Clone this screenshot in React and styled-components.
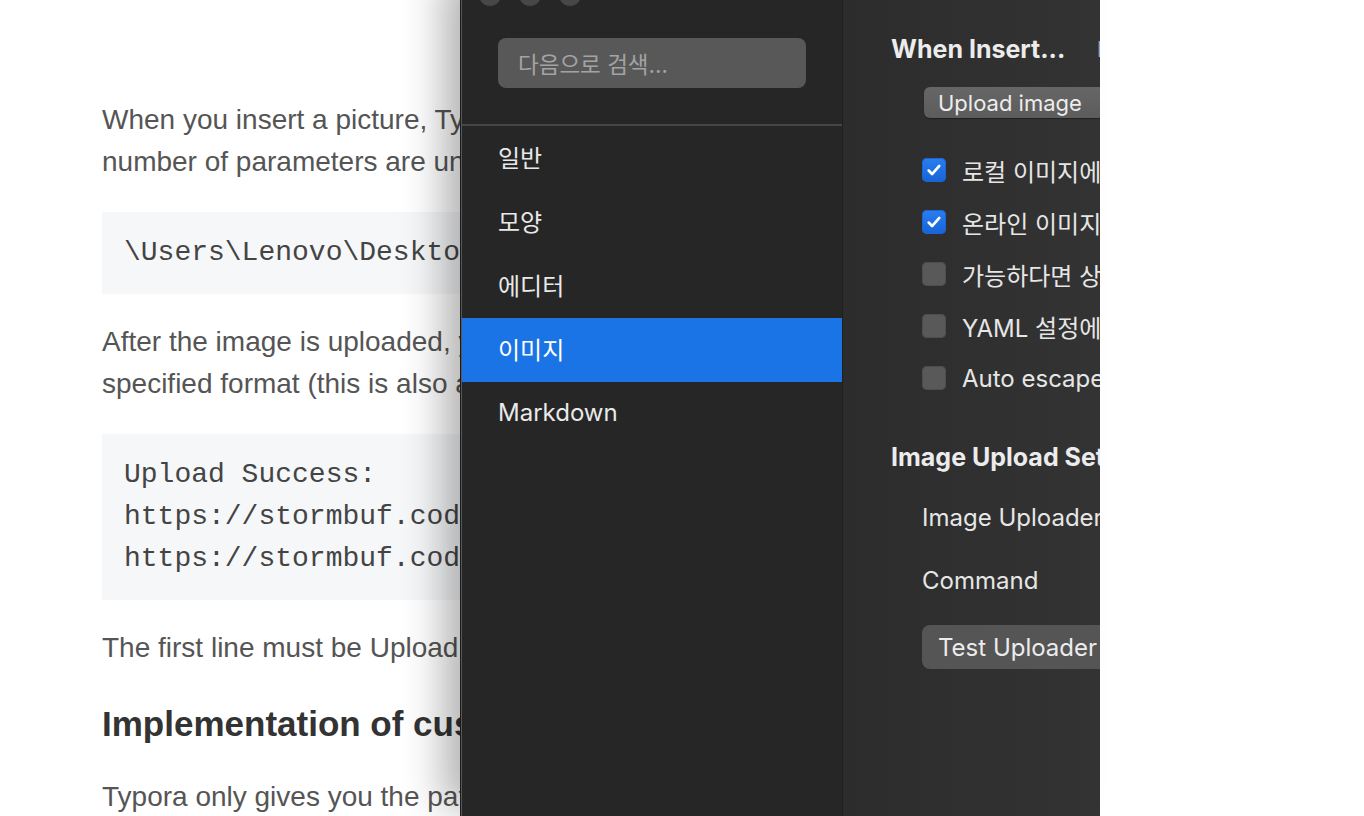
import styled, { createGlobalStyle } from "styled-components";

const GlobalStyle = createGlobalStyle`
  html, body {
    margin: 0;
    padding: 0;
    background: #fff;
    overflow: hidden;
  }
  * {
    box-sizing: border-box;
  }
`;

const UI_FONT = `Inter, "Noto Sans CJK KR", "Noto Sans", sans-serif`;

const navItems = ["일반", "모양", "에디터", "이미지", "Markdown"];

const options = [
    { label: "로컬 이미지에 위의 규칙 적용", checked: true },
    { label: "온라인 이미지에 위의 규칙 적용", checked: true },
    { label: "가능하다면 상대적 위치 사용", checked: false },
    { label: "YAML 설정에 이미지 경로 추가", checked: false },
    { label: "Auto escape image URL when insert", checked: false },
];

const Check = () => (
    <svg width="18" height="18" viewBox="0 0 16 16" fill="none">
        <path d="M3.3 8.5l3 3.1L12.7 4.4" stroke="#fff" strokeWidth="2.4" strokeLinecap="round" strokeLinejoin="round" />
    </svg>
);

const App = () => {
    return (
        <Page>
            <GlobalStyle />
            <Doc>
                <Paragraph>
                    When you insert a picture, Typora will call the command you configured, and an unknown<br />
                    number of parameters are uncovered and passed to your custom command in order.
                </Paragraph>
                <CodeBlock>{"\\Users\\Lenovo\\Desktop\\image.png"}</CodeBlock>
                <Paragraph>
                    After the image is uploaded, your custom command must return the picture links in the<br />
                    specified format (this is also a standard output of the command line):
                </Paragraph>
                <CodeBlock>
                    {"Upload Success:\nhttps://stormbuf.coding.net/p/image/1.png\nhttps://stormbuf.coding.net/p/image/2.png"}
                </CodeBlock>
                <Paragraph>The first line must be Upload Success: and then one picture link per line.</Paragraph>
                <Heading>Implementation of custom upload commands</Heading>
                <Paragraph>Typora only gives you the path of the local picture, and you upload it yourself.</Paragraph>
            </Doc>

            <Window>
                <Sidebar>
                    <Lights>
                        <Light />
                        <Light />
                        <Light />
                    </Lights>
                    <Search>다음으로 검색...</Search>
                    <Divider />
                    <Nav>
                        {navItems.map((item) => (
                            <NavItem key={item} $active={item === "이미지"}>{item}</NavItem>
                        ))}
                    </Nav>
                </Sidebar>

                <Content>
                    <SectionRow>
                        <SectionTitle>When Insert...</SectionTitle>
                        <SideLabel>Insert image</SideLabel>
                    </SectionRow>
                    <SmallButton>Upload image</SmallButton>

                    <Options>
                        {options.map((opt) => (
                            <OptionRow key={opt.label}>
                                <Box $checked={opt.checked}>{opt.checked && <Check />}</Box>
                                <OptionLabel>{opt.label}</OptionLabel>
                            </OptionRow>
                        ))}
                    </Options>

                    <SectionTitle $gap>Image Upload Setting</SectionTitle>
                    <FieldRow $first>Image Uploader</FieldRow>
                    <FieldRow>Command</FieldRow>
                    <BigButton>Test Uploader</BigButton>
                </Content>
            </Window>
        </Page>
    );
}

const Page = styled.div`
    position: relative;
    width: 1364px;
    height: 816px;
    overflow: hidden;
    background: #fff;
`;

const Doc = styled.div`
    width: 980px;
    padding: 99px 0 0 102px;
    overflow: hidden;
    font-family: "Liberation Sans", Arial, sans-serif;
    font-size: 28px;
    line-height: 42px;
    color: #555;
`;

const Paragraph = styled.p`
    margin: 0;
    white-space: nowrap;
`;

const CodeBlock = styled.pre`
    margin: 29px 0 27px;
    padding: 20px 22px;
    background: #f6f7f9;
    font-family: "Liberation Mono", "Courier New", monospace;
    font-size: 28px;
    line-height: 42px;
    color: #444;
    white-space: pre;
    overflow: hidden;
`;

const Heading = styled.h2`
    margin: 32px 0 29px;
    font-size: 35px;
    line-height: 46px;
    font-weight: 700;
    color: #333;
    white-space: nowrap;
`;

const Window = styled.div`
    position: absolute;
    left: 461px;
    top: -40px;
    width: 639px;
    height: 860px;
    display: flex;
    border-left: 1px solid #575757;
    box-shadow: -1px 0 0 #1a1a1a, -28px 0 40px -12px rgba(0, 0, 0, 0.32);
    font-family: ${UI_FONT};
    overflow: hidden;
`;

const Sidebar = styled.div`
    width: 381px;
    flex-shrink: 0;
    background: #262626;
    border-right: 1px solid #1f1f1f;
    display: flex;
    flex-direction: column;
`;

const Lights = styled.div`
    display: flex;
    gap: 18px;
    padding: 24px 0 0 17px;
`;

const Light = styled.span`
    width: 22px;
    height: 22px;
    border-radius: 50%;
    background: #474747;
`;

const Search = styled.div`
    margin: 32px 0 0 36px;
    width: 308px;
    height: 50px;
    border-radius: 8px;
    background: #585858;
    padding-left: 20px;
    display: flex;
    align-items: center;
    font-size: 22.5px;
    color: #a3a3a3;
`;

const Divider = styled.div`
    margin-top: 36px;
    height: 2px;
    background: #454545;
`;

const Nav = styled.div`
    display: flex;
    flex-direction: column;
`;

const NavItem = styled.div`
    height: 64px;
    padding-left: 36px;
    padding-bottom: 3px;
    display: flex;
    align-items: center;
    font-size: 24px;
    background: ${(p) => (p.$active ? "#1a74e6" : "transparent")};
    color: ${(p) => (p.$active ? "#fff" : "#e9e9e9")};
`;

const Content = styled.div`
    flex: 1;
    min-width: 0;
    background: linear-gradient(90deg, #2c2c2c, #333333);
    padding: 73px 0 0 48px;
    display: flex;
    flex-direction: column;
    align-items: flex-start;
    color: #e6e6e6;
    white-space: nowrap;
    overflow: hidden;
`;

const SectionRow = styled.div`
    display: flex;
    gap: 32px;
    align-items: center;
`;

const SectionTitle = styled.div`
    font-size: 25px;
    line-height: 32px;
    font-weight: 700;
    color: #ececec;
    margin-top: ${(p) => (p.$gap ? "37px" : "0")};
`;

const SideLabel = styled.span`
    font-size: 22px;
    font-weight: 700;
    color: #a4a4b4;
`;

const SmallButton = styled.div`
    margin: 22px 0 0 33px;
    height: 31px;
    padding: 0 18px 0 14px;
    width: 240px;
    border-radius: 6px;
    background: linear-gradient(#666, #5c5c5c);
    box-shadow: 0 1px 1px rgba(0, 0, 0, 0.35);
    display: flex;
    align-items: center;
    font-size: 22px;
    color: #ededed;
`;

const Options = styled.div`
    margin: 26px 0 0 31px;
    display: flex;
    flex-direction: column;
`;

const OptionRow = styled.div`
    height: 52px;
    display: flex;
    align-items: center;
    gap: 16px;
`;

const Box = styled.span`
    width: 24px;
    height: 24px;
    border-radius: 5px;
    flex-shrink: 0;
    display: flex;
    align-items: center;
    justify-content: center;
    background: ${(p) => (p.$checked ? "linear-gradient(#2a7ef0, #1663d6)" : "#595959")};
    box-shadow: inset 0 0 0 1px ${(p) => (p.$checked ? "#1a66d4" : "#4d4d4d")};
`;

const OptionLabel = styled.span`
    font-size: 24px;
    color: #e6e6e6;
`;

const FieldRow = styled.div`
    margin: ${(p) => (p.$first ? "13px" : "0")} 0 0 31px;
    height: 63px;
    display: flex;
    align-items: center;
    font-size: 24px;
    color: #e6e6e6;
`;

const BigButton = styled.div`
    margin: 13px 0 0 31px;
    width: 240px;
    height: 44px;
    padding-left: 16px;
    border-radius: 8px;
    background: #555;
    display: flex;
    align-items: center;
    font-size: 24px;
    color: #ececec;
`;

export default App;
